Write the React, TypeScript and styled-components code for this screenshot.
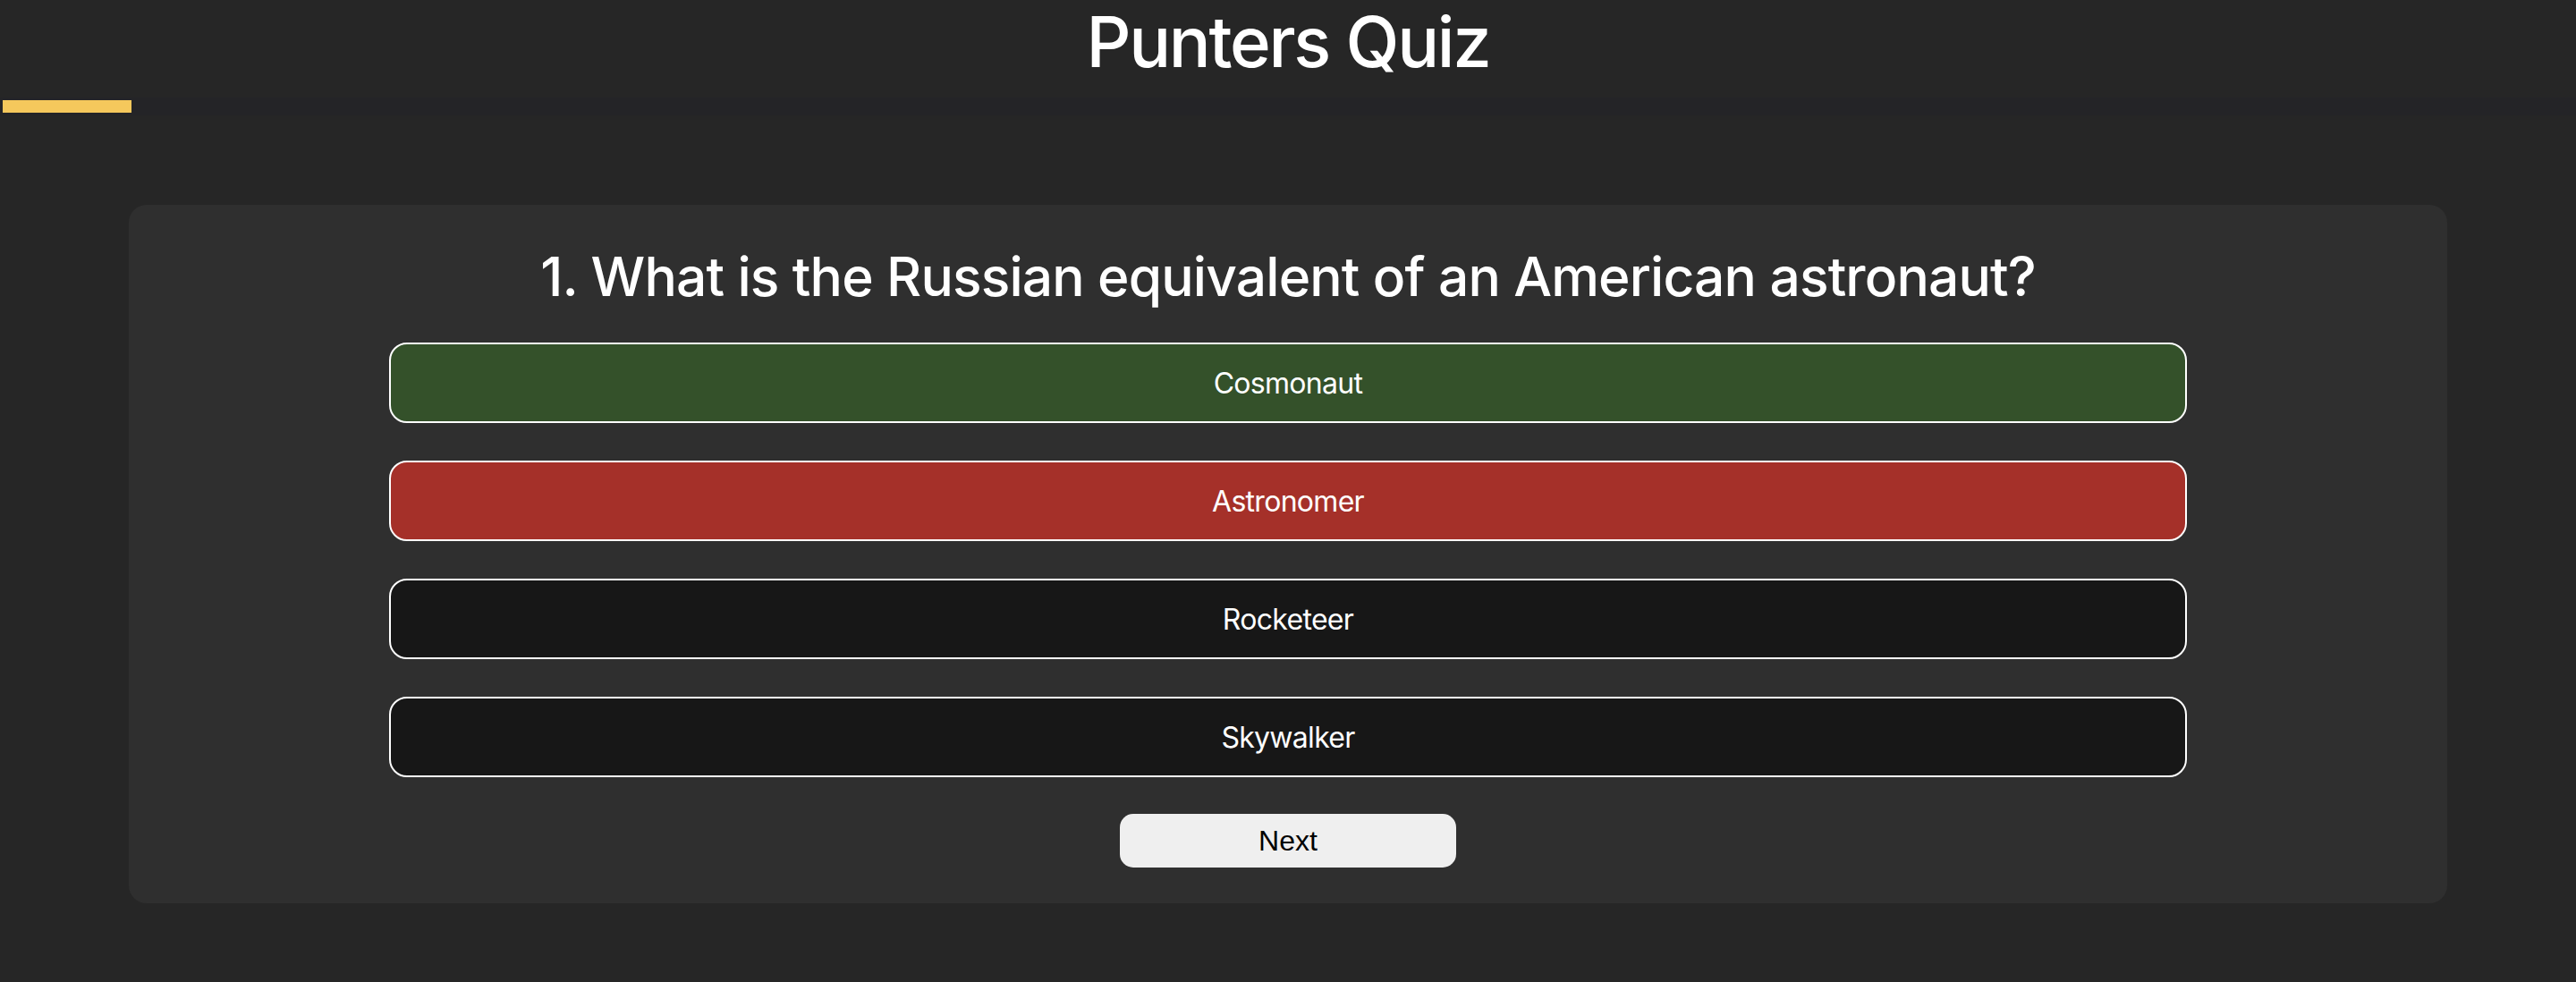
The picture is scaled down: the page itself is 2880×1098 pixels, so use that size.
import React from 'react'
import styled, { createGlobalStyle } from 'styled-components'

type Status = 'correct' | 'wrong' | 'idle'

interface Answer {
  text: string
  status: Status
}

const GlobalStyle = createGlobalStyle`
  html, body {
    margin: 0;
    padding: 0;
    background: #262626;
  }
  body {
    font-family: Inter, "Noto Sans", sans-serif;
    color: #ffffff;
  }
`

const Page = styled.div`
  min-height: 1098px;
  display: flex;
  flex-direction: column;
`

const Header = styled.header`
  display: flex;
  flex-direction: column;
  align-items: center;
`

const Title = styled.h1`
  margin: 0;
  font-size: 78px;
  font-weight: 500;
  line-height: 94px;
  letter-spacing: -2.3px;
`

const Track = styled.div`
  align-self: stretch;
  margin-top: 15px;
  height: 20px;
  padding: 3px;
  box-sizing: border-box;
  background: #242427;
`

const Fill = styled.div`
  height: 100%;
  background: #f5c85c;
`

const Card = styled.main`
  margin: 100px 144px 0;
  padding: 44px 0 40px;
  background: #2f2f2f;
  border-radius: 20px;
  display: flex;
  flex-direction: column;
  align-items: center;
`

const Question = styled.h2`
  margin: 0 0 37px;
  font-size: 60.5px;
  font-weight: 500;
  line-height: 73px;
  letter-spacing: -0.86px;
`

const AnswerList = styled.div`
  width: 2010px;
  display: flex;
  flex-direction: column;
  gap: 42px;
`

const answerBg: Record<Status, string> = {
  correct: '#34512a',
  wrong: '#a53029',
  idle: '#171717',
}

const AnswerButton = styled.button<{ $status: Status }>`
  height: 90px;
  border: 2px solid #ffffff;
  border-radius: 20px;
  background: ${(p) => answerBg[p.$status]};
  color: #ffffff;
  font-family: Inter, "Noto Sans", sans-serif;
  font-size: 32px;
  letter-spacing: -0.7px;
  cursor: pointer;
`

const NextButton = styled.button`
  margin-top: 41px;
  width: 376px;
  height: 60px;
  border: none;
  border-radius: 15px;
  background: #efefef;
  color: #000000;
  font-family: "Liberation Sans", Arial, sans-serif;
  font-size: 32px;
  cursor: pointer;
`

const answers: Answer[] = [
  { text: 'Cosmonaut', status: 'correct' },
  { text: 'Astronomer', status: 'wrong' },
  { text: 'Rocketeer', status: 'idle' },
  { text: 'Skywalker', status: 'idle' },
]

const App: React.FC = () => {
  const progress = 5

  return (
    <Page>
      <GlobalStyle />
      <Header>
        <Title>Punters Quiz</Title>
        <Track>
          <Fill style={{ width: `${progress}%` }} />
        </Track>
      </Header>
      <Card>
        <Question>1. What is the Russian equivalent of an American astronaut?</Question>
        <AnswerList>
          {answers.map((a) => (
            <AnswerButton key={a.text} $status={a.status}>
              {a.text}
            </AnswerButton>
          ))}
        </AnswerList>
        <NextButton>Next</NextButton>
      </Card>
    </Page>
  )
}

export default App
